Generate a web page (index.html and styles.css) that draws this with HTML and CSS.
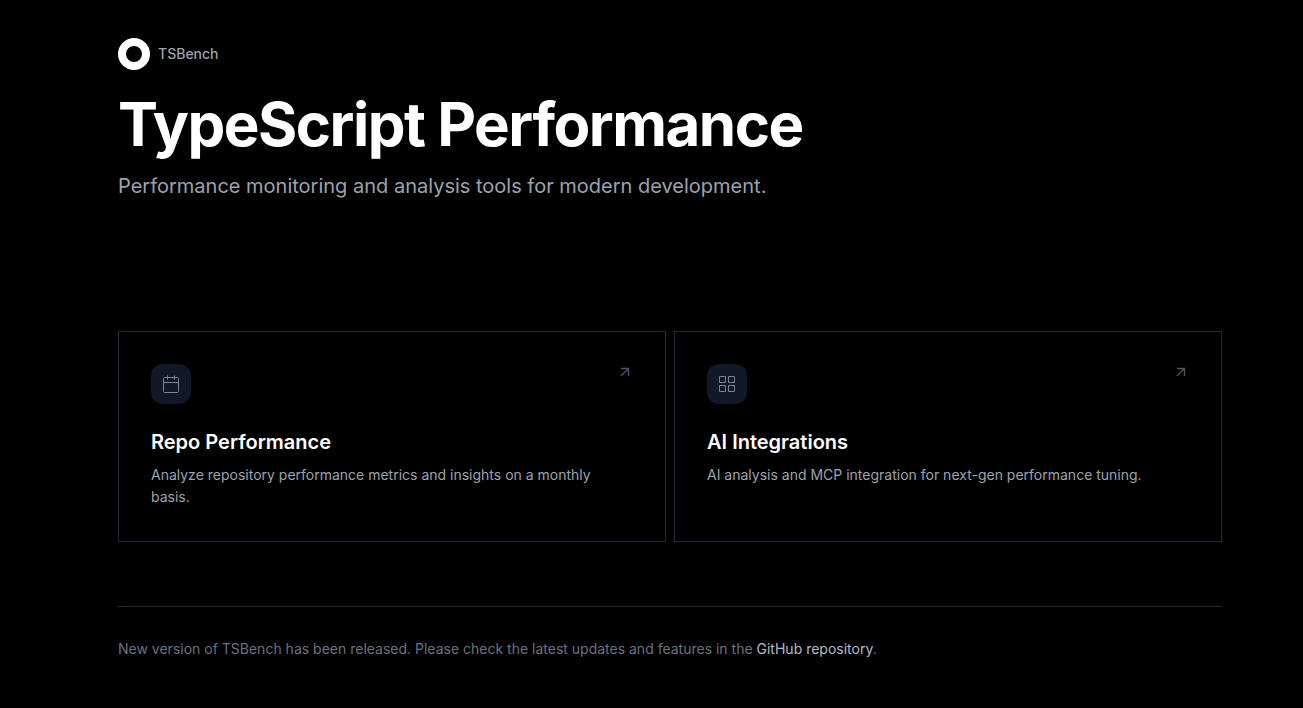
FILE: index.html
```html
<!DOCTYPE html>
<html lang="en">
<head>
<meta charset="utf-8">
<meta name="viewport" content="width=device-width, initial-scale=1">
<title>TSBench</title>
<link rel="stylesheet" href="styles.css">
</head>
<body>
<div class="page">
  <header class="header">
    <div class="brand">
      <svg class="logo" viewBox="0 0 32 32" aria-hidden="true"><circle cx="16" cy="16" r="12" fill="none" stroke="#fff" stroke-width="8"/></svg>
      <span>TSBench</span>
    </div>
    <h1 class="title">TypeScript Performance</h1>
    <p class="lead">Performance monitoring and analysis tools for modern development.</p>
  </header>
  <main class="cards">
    <a class="card" href="#repo">
      <div class="card-top">
        <span class="tile"><svg class="icon" viewBox="0 0 20 20" aria-hidden="true"><rect x="2.5" y="3.5" width="15" height="15" rx="1"/><path d="M2.5 8.5h15M6.5 1.5v4M13.5 1.5v4"/></svg></span>
        <svg class="arrow" viewBox="0 0 16 16" aria-hidden="true"><path d="M4 12l7.5-7.5M4 4.5h7.5v7.5"/></svg>
      </div>
      <h2 class="card-title">Repo Performance</h2>
      <p class="card-text">Analyze repository performance metrics and insights on a monthly basis.</p>
    </a>
    <a class="card" href="#ai">
      <div class="card-top">
        <span class="tile"><svg class="icon" viewBox="0 0 20 20" aria-hidden="true"><path d="M2.5 2.5h6v6h-6zM11.5 2.5h6v6h-6zM2.5 11.5h6v6h-6zM11.5 11.5h6v6h-6z"/></svg></span>
        <svg class="arrow" viewBox="0 0 16 16" aria-hidden="true"><path d="M4 12l7.5-7.5M4 4.5h7.5v7.5"/></svg>
      </div>
      <h2 class="card-title">AI Integrations</h2>
      <p class="card-text">AI analysis and MCP integration for next-gen performance tuning.</p>
    </a>
  </main>
  <footer class="footer">
    <p>New version of TSBench has been released. Please check the latest updates and features in the <a class="link" href="#github">GitHub repository</a>.</p>
  </footer>
</div>
</body>
</html>
```
FILE: styles.css
```css
* { box-sizing: border-box; }
body { margin: 0; background: #000; color: #fff; font-family: Inter, "Liberation Sans", sans-serif; }
h1, h2, p { margin: 0; }
.page { padding: 38px 81px 48px 118px; }
.brand { display: flex; align-items: center; gap: 8px; color: #9ca3af; font-size: 14px; line-height: 20px; font-weight: 500; }
.logo { width: 32px; height: 32px; }
.title { margin-top: 24px; font-size: 60px; line-height: 60px; font-weight: 700; letter-spacing: -0.025em; }
.lead { margin-top: 16px; color: #9ca3af; font-size: 20px; line-height: 32px; }
.cards { display: grid; grid-template-columns: 1fr 1fr; gap: 8px; margin-top: 129px; }
.card { padding: 32px 32px 33px; border: 1px solid #1f2937; color: inherit; text-decoration: none; }
.card-top { display: flex; justify-content: space-between; align-items: flex-start; margin-bottom: 24px; }
.tile { display: flex; align-items: center; justify-content: center; width: 40px; height: 40px; border-radius: 12px; background: #111827; }
.icon { width: 20px; height: 20px; fill: none; stroke: #7b8290; stroke-width: 1; }
.arrow { width: 16px; height: 16px; fill: none; stroke: #4b5563; stroke-width: 1.3; }
.card-title { font-size: 20px; line-height: 28px; font-weight: 600; }
.card-text { margin-top: 8px; color: #9ca3af; font-size: 14px; line-height: 22px; }
.footer { margin-top: 64px; padding-top: 32px; border-top: 1px solid #1e293b; color: #6b7280; font-size: 14px; line-height: 20px; }
.link { color: #b4bac4; text-decoration: none; }
```
